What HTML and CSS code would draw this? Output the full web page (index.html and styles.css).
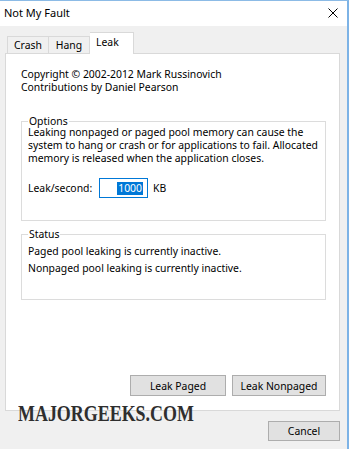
FILE: index.html
```html
<!DOCTYPE html>
<html lang="en">
<head>
    <meta charset="UTF-8">
    <title>Not My Fault</title>
    <link rel="stylesheet" href="styles.css">
</head>
<body>
    <div class="window">
        <div class="titlebar">
            <span class="title">Not My Fault</span>
            <svg class="close" width="10" height="10" viewBox="0 0 10 10">
                <path d="M0.5 0.5 L9.5 9.5 M9.5 0.5 L0.5 9.5" stroke="#000" stroke-width="1" fill="none"/>
            </svg>
        </div>

        <div class="tabs">
            <div class="tab">Crash</div>
            <div class="tab">Hang</div>
            <div class="tab active">Leak</div>
        </div>

        <div class="panel">
            <p class="credits">Copyright &copy; 2002-2012 Mark Russinovich<br>Contributions by Daniel Pearson</p>

            <fieldset class="group options">
                <legend>Options</legend>
                <p class="desc">Leaking nonpaged or paged pool memory can cause the<br>system to hang or crash or for applications to fail. Allocated<br>memory is released when the application closes.</p>
                <div class="rate">
                    <label for="rate">Leak/second:</label>
                    <div class="input" id="rate"><span class="sel">1000</span></div>
                    <span class="unit">KB</span>
                </div>
            </fieldset>

            <fieldset class="group status">
                <legend>Status</legend>
                <p>Paged pool leaking is currently inactive.</p>
                <p>Nonpaged pool leaking is currently inactive.</p>
            </fieldset>

            <div class="actions">
                <button class="btn paged">Leak Paged</button>
                <button class="btn nonpaged">Leak Nonpaged</button>
            </div>
        </div>

        <div class="footer">
            <button class="btn cancel">Cancel</button>
        </div>

        <div class="watermark">MAJORGEEKS.COM</div>
    </div>
</body>
</html>
```

FILE: styles.css
```css
body {
    margin: 0;
    font-family: 'Noto Sans', 'Open Sans', sans-serif;
    font-size: 10.4px;
    color: #000;
    background: #f0f0f0;
}

.window {
    position: relative;
    width: 347px;
    height: 448px;
    border-top: 1px solid #8cbbe6;
    border-right: 2px solid #7db3e6;
    background: #f0f0f0;
    display: flex;
    flex-direction: column;
    overflow: hidden;
}

.titlebar {
    height: 25px;
    background: #fff;
    display: flex;
    align-items: center;
    justify-content: space-between;
    padding: 0 9px 0 4px;
}

.title {
    font-size: 11px;
    line-height: 14px;
    margin-top: -1px;
}

.close {
    display: block;
    margin-top: -1px;
}

.tabs {
    display: flex;
    align-items: flex-end;
    height: 20px;
    margin: 7px 0 0 7px;
    position: relative;
    z-index: 1;
}

.tab {
    height: 16px;
    line-height: 16px;
    border: 1px solid #d9d9d9;
    border-bottom: none;
    background: #f0f0f0;
    padding: 0 6px;
    text-align: center;
}

.tab:first-child {
    width: 28px;
}

.tab + .tab {
    border-left: none;
    width: 28px;
}

.tab.active {
    height: 21px;
    line-height: 18px;
    background: #fff;
    margin-bottom: -1px;
    width: 31px;
    text-align: left;
}

.panel {
    margin-left: 5px;
    width: 333px;
    height: 356px;
    background: #fff;
    border: 1px solid #d9d9d9;
    display: flex;
    flex-direction: column;
}

.credits {
    margin: 0;
    padding: 14px 15px 0;
    line-height: 13px;
}

.group {
    margin: 23px 0 0 15px;
    width: 291px;
    padding: 0 6px;
    border: 1px solid #dcdcdc;
    min-width: 0;
}

.group legend {
    padding: 0 1px;
    margin-left: 0;
    line-height: 9px;
}

.desc {
    margin: 0;
    line-height: 13px;
    white-space: nowrap;
}

.options {
    padding-bottom: 22px;
}

.rate {
    display: flex;
    align-items: center;
    margin-top: 13px;
    height: 20px;
}

.rate label {
    width: 71px;
}

.input {
    height: 18px;
    border: 1px solid #0078d7;
    display: flex;
    align-items: center;
    justify-content: flex-end;
    padding-right: 4px;
    box-sizing: content-box;
    width: 43px;
}

.sel {
    background: #0078d7;
    color: #fff;
    line-height: 13px;
    padding: 0 1px;
}

.unit {
    margin-left: 5px;
}

.status {
    margin-top: 9px;
    padding-bottom: 22px;
}

.status p {
    margin: 0;
    line-height: 17px;
}

.status legend + p {
    margin-top: 4px;
}

.actions {
    margin-top: auto;
    display: flex;
    justify-content: flex-end;
    gap: 6px;
    padding: 0 13px 14px 0;
}

.btn {
    font-family: inherit;
    font-size: 10.4px;
    color: #000;
    background: #e1e1e1;
    border: 1px solid #adadad;
    height: 21px;
    padding: 0;
    line-height: 18px;
}

.paged {
    width: 96px;
}

.nonpaged {
    width: 94px;
}

.footer {
    display: flex;
    justify-content: flex-end;
    padding: 10px 7px 0 0;
}

.cancel {
    width: 72px;
    height: 20px;
}

.watermark {
    position: absolute;
    left: 18px;
    top: 401px;
    font-family: 'Liberation Serif', serif;
    font-weight: bold;
    font-size: 23px;
    line-height: 24px;
    color: #2e2e2e;
    transform: scaleX(0.78);
    transform-origin: left center;
}
```
